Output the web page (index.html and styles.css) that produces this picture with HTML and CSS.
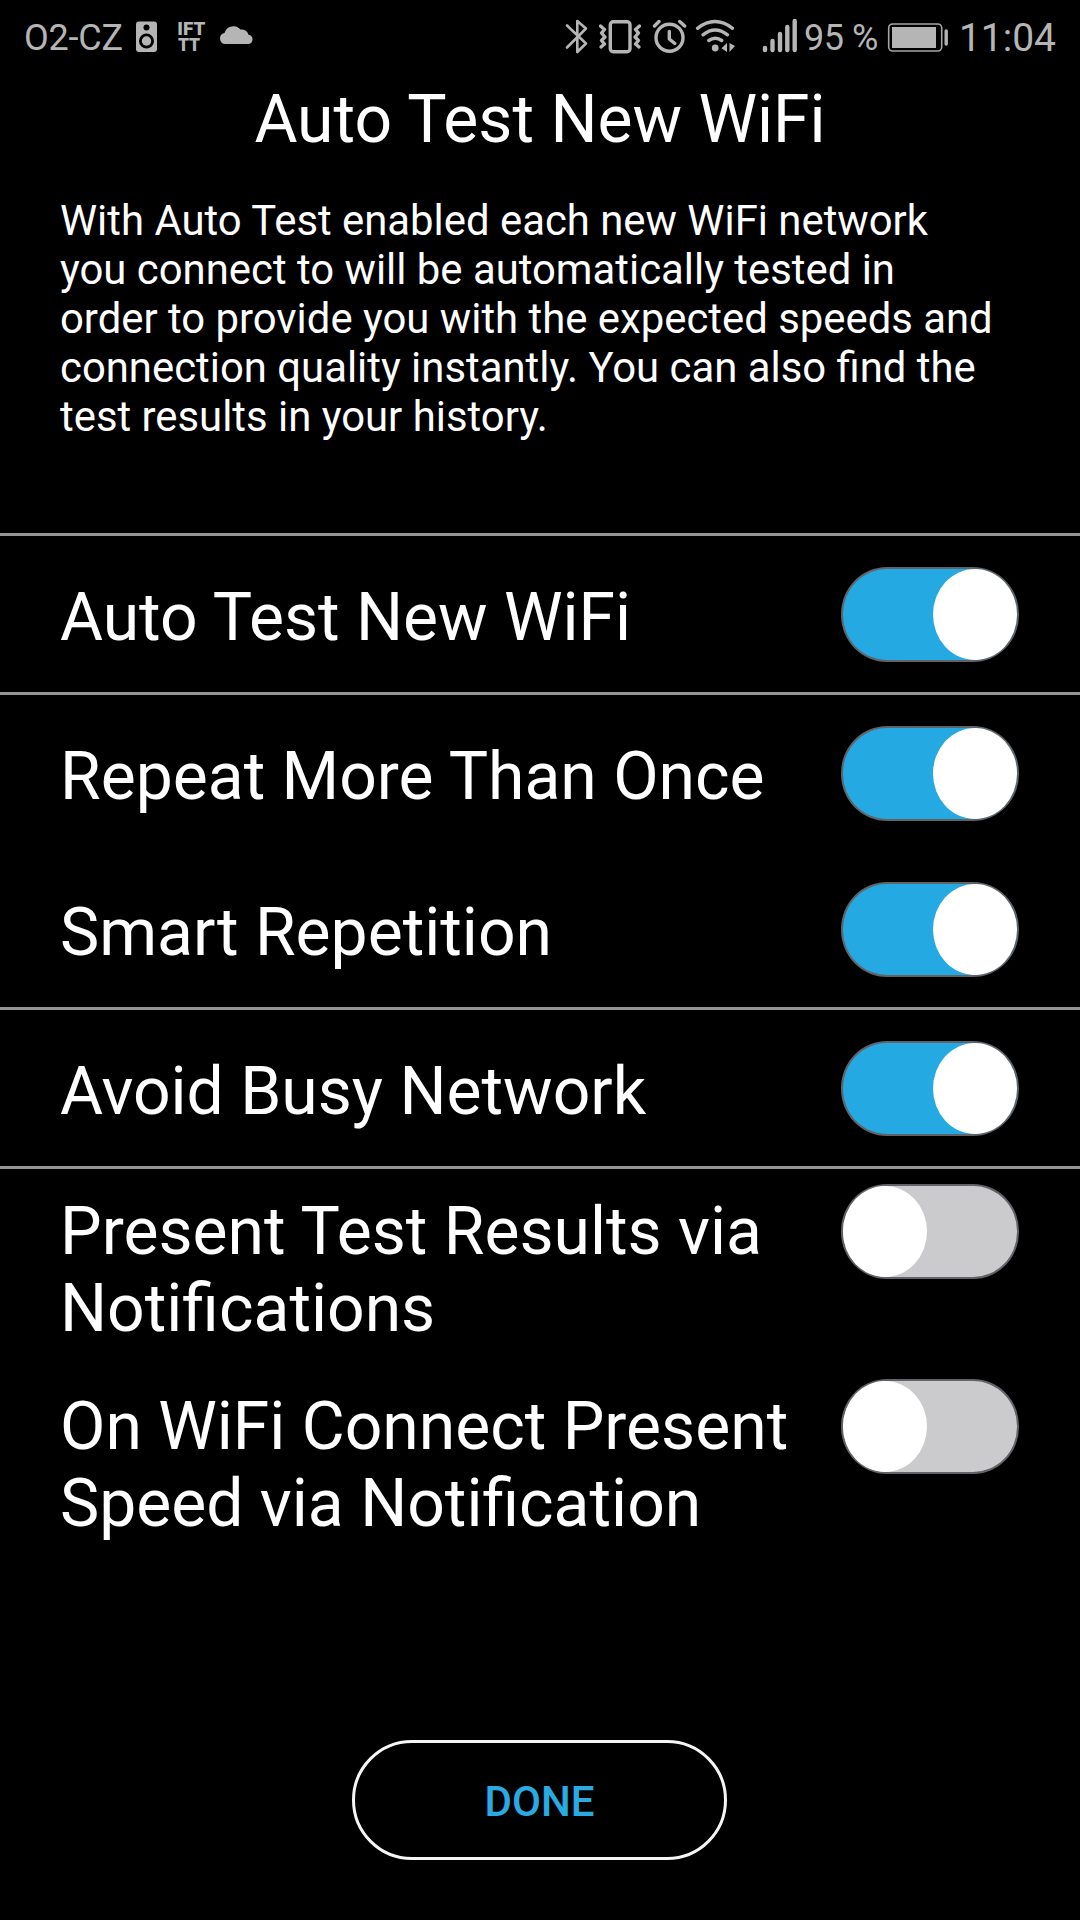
FILE: index.html
```html
<!DOCTYPE html>
<html lang="en">

<head>
  <meta charset="UTF-8">
  <meta name="viewport" content="width=device-width, initial-scale=1.0">
  <title>Auto Test New WiFi</title>

  <link rel="stylesheet" href="styles.css">
</head>

<body>
  <header class="status-bar">
    <div class="status-left">
      <span class="carrier">O2-CZ</span>
      <!-- speaker -->
      <svg width="24" height="80" viewBox="135 0 24 80">
        <rect x="136" y="21.5" width="21" height="30.5" rx="3" fill="#b5b5b5" />
        <circle cx="146.5" cy="27.5" r="3" fill="#000" />
        <circle cx="146.5" cy="41" r="7.5" fill="#000" />
        <circle cx="146.5" cy="41" r="4.7" fill="#b5b5b5" />
      </svg>
      <!-- ifttt -->
      <svg class="ifttt" width="30" height="80" viewBox="177 0 30 80">
        <text x="177.3" y="34.5" textLength="28" lengthAdjust="spacingAndGlyphs">IFT</text>
        <text x="178" y="51.3" textLength="22" lengthAdjust="spacing">TT</text>
      </svg>
      <!-- cloud -->
      <svg width="35" height="80" viewBox="219 0 35 80">
        <path d="M225.5 44a5.5 5.5 0 0 1-1-10.9a9.2 9.2 0 0 1 16-3.5a7 7 0 0 1 8 5.1a4.7 4.7 0 0 1 0 9.3z" fill="#b5b5b5" />
      </svg>
    </div>

    <div class="status-right">
      <!-- bluetooth -->
      <svg width="24" height="80" viewBox="565 0 24 80">
        <path class="line thin" d="M567 25.5L586 43.5L577.3 52V21L586 28.5L567 47.5" />
      </svg>
      <!-- vibrate -->
      <svg width="46" height="80" viewBox="597 0 46 80">
        <rect class="line" x="610.3" y="21.7" width="19.7" height="30" rx="3" />
        <path class="line" d="M600.5 26l4 3.5l-3 3.5l3.5 4l-3.5 3.5l3 3.5l-3.5 3M639.5 26l-4 3.5l3 3.5l-3.5 4l3.5 3.5l-3 3.5l3.5 3" />
      </svg>
      <!-- alarm -->
      <svg width="36" height="80" viewBox="651 0 36 80">
        <circle class="line" cx="669.5" cy="37.7" r="13.5" />
        <path class="line" d="M669.3 31.5v7.5l5.5 4.5M654.5 26l4.5-4.5M679.7 21.5l5 4.5" />
      </svg>
      <!-- wifi -->
      <svg width="42" height="80" viewBox="695 0 42 80">
        <path class="line" d="M697.5 28.3q17.5-13.5 35 0M703 34.8q12-9.5 24.5 0M708.8 40.5q6.5-4.5 13 0" />
        <circle cx="715.2" cy="48" r="3.4" fill="#b5b5b5" />
        <path d="M727 43v9l-5.5-3.7zM729.5 43v9l5.5-6z" fill="#b5b5b5" />
      </svg>
      <!-- signal -->
      <svg class="signal" width="37" height="80" viewBox="762 0 37 80">
        <path d="M765 48v2M772.5 41v9M780 34v16M787.3 27v23M794.7 21v29" />
      </svg>
      <span class="percent">95 %</span>
      <!-- battery -->
      <svg width="64" height="80" viewBox="887 0 64 80">
        <rect x="888.7" y="24" width="53" height="27" rx="4" fill="none" stroke="#a5a5a5" stroke-width="1.6" />
        <rect x="892" y="27" width="44" height="21" fill="#b5b5b5" />
        <path class="line" d="M946.2 31v13" />
      </svg>
      <span class="clock">11:04</span>
    </div>
  </header>

  <main>
    <h1>Auto Test New WiFi</h1>
    <p class="description">
      With Auto Test enabled each new WiFi network<br>
      you connect to will be automatically tested in<br>
      order to provide you with the expected speeds and<br>
      connection quality instantly. You can also find the<br>
      test results in your history.
    </p>

    <section>
      <label class="row">
        <span>Auto Test New WiFi</span>
        <input type="checkbox" class="toggle" checked>
      </label>
    </section>
    <section>
      <label class="row">
        <span>Repeat More Than Once</span>
        <input type="checkbox" class="toggle" checked>
      </label>
      <label class="row">
        <span>Smart Repetition</span>
        <input type="checkbox" class="toggle" checked>
      </label>
    </section>
    <section>
      <label class="row">
        <span>Avoid Busy Network</span>
        <input type="checkbox" class="toggle" checked>
      </label>
    </section>
    <section>
      <label class="row tall">
        <span>Present Test Results via<br>Notifications</span>
        <input type="checkbox" class="toggle">
      </label>
      <label class="row tall">
        <span>On WiFi Connect Present<br>Speed via Notification</span>
        <input type="checkbox" class="toggle">
      </label>
    </section>
  </main>

  <footer>
    <button>DONE</button>
  </footer>
</body>

</html>
```
FILE: styles.css
```css
* {
  box-sizing: border-box;
}

body {
  background: #000;
  color: #fff;
  display: flex;
  flex-direction: column;
  font-family: Roboto, sans-serif;
  height: 1920px;
  margin: 0;
}

.status-bar {
  color: #b5b5b5;
  display: flex;
  height: 80px;
  justify-content: space-between;
  line-height: 76px;
  padding: 0 24px;
  white-space: nowrap;
}

.status-left,
.status-right {
  display: flex;
}

.status-left svg + svg {
  margin-left: 18px;
}

.status-left .ifttt + svg {
  margin-left: 12px;
}

.carrier {
  font-size: 36px;
  letter-spacing: -0.2px;
  width: 111px;
}

.ifttt text {
  fill: #b5b5b5;
  font-size: 17.5px;
  font-weight: 900;
}

.status-right {
  width: 491px;
}

.status-right svg {
  flex: none;
  margin-right: 8px;
}

.status-right .signal {
  margin-left: 17px;
  margin-right: 5px;
}

.line {
  fill: none;
  stroke: #b5b5b5;
  stroke-linecap: round;
  stroke-linejoin: round;
  stroke-width: 3.4;
}

.thin {
  stroke-width: 2.6;
}

.signal path {
  stroke: #b5b5b5;
  stroke-linecap: round;
  stroke-width: 4.4;
}

.percent {
  font-size: 36px;
  letter-spacing: -0.5px;
  width: 83px;
}

.clock {
  font-size: 39px;
}

h1 {
  font-size: 66px;
  font-weight: 400;
  line-height: 77px;
  margin: 1px 0 0;
  text-align: center;
}

.description {
  font-size: 41.85px;
  height: 337px;
  line-height: 49px;
  margin: 38px 0 0;
  padding-left: 60px;
}

section {
  border-top: 3px solid #949494;
}

.row {
  align-items: center;
  display: flex;
  font-size: 66px;
  height: 156px;
  justify-content: space-between;
  line-height: 77px;
  padding: 0 61px 0 60px;
}

.row span {
  padding-top: 7px;
}

.toggle {
  appearance: none;
  background: #cbcbcd;
  border: 2px solid #606468;
  border-radius: 46px / 47px;
  flex: none;
  height: 95px;
  margin: 0;
  width: 178px;
}

.toggle::before {
  background: #fff;
  border-radius: 50%;
  content: "";
  display: block;
  height: 91px;
  width: 84px;
}

.toggle:checked {
  background: #25a9e2;
}

.toggle:checked::before {
  margin-left: auto;
}

.tall {
  align-items: flex-start;
  height: 195px;
  padding-top: 15px;
}

.tall span {
  padding-top: 9px;
}

footer {
  margin-top: auto;
  padding-bottom: 60px;
  padding-right: 1px;
}

button {
  background: none;
  border: 3px solid #f5f5f5;
  border-radius: 60px;
  color: #29abe2;
  display: block;
  font-family: inherit;
  font-size: 42px;
  font-weight: 500;
  height: 120px;
  margin: 0 auto;
  padding: 2px 0 0;
  width: 375px;
}
```
